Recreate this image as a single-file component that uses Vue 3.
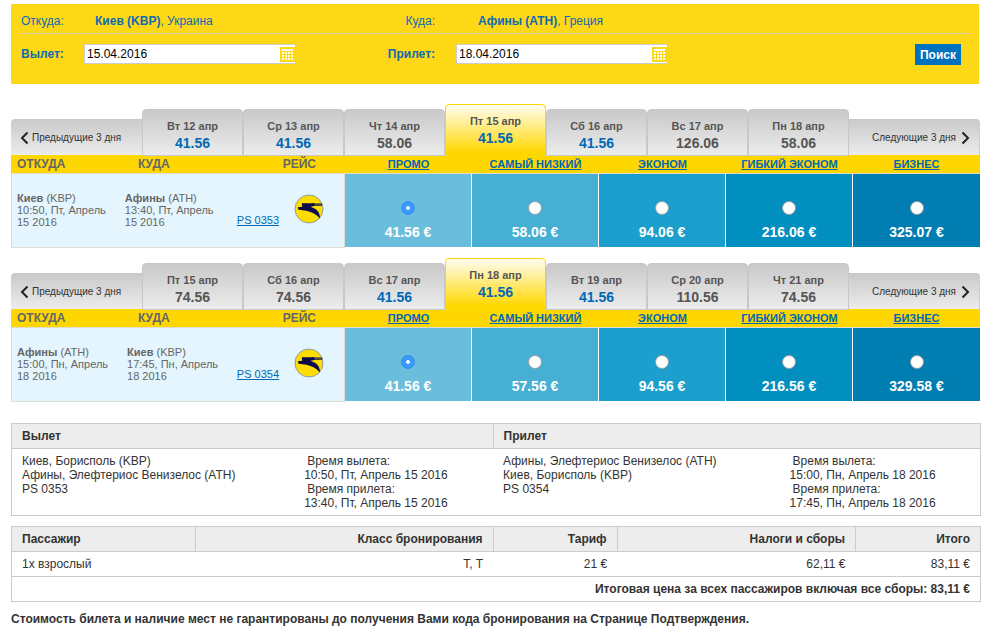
<script setup>
import { reactive } from 'vue'

const fareClasses = ['ПРОМО', 'САМЫЙ НИЗКИЙ', 'ЭКОНОМ', 'ГИБКИЙ ЭКОНОМ', 'БИЗНЕС']

const search = reactive({ departure: '15.04.2016', arrival: '18.04.2016' })

const legs = reactive([
  {
    id: 'out',
    days: [
      { label: 'Вт 12 апр', price: '41.56', best: true },
      { label: 'Ср 13 апр', price: '41.56', best: true },
      { label: 'Чт 14 апр', price: '58.06' },
      { label: 'Пт 15 апр', price: '41.56', best: true, active: true },
      { label: 'Сб 16 апр', price: '41.56', best: true },
      { label: 'Вс 17 апр', price: '126.06' },
      { label: 'Пн 18 апр', price: '58.06' },
    ],
    points: [
      { city: 'Киев', code: 'KBP', time: '10:50, Пт, Апрель', date: '15 2016' },
      { city: 'Афины', code: 'ATH', time: '13:40, Пт, Апрель', date: '15 2016' },
    ],
    flight: 'PS 0353',
    fares: ['41.56 €', '58.06 €', '94.06 €', '216.06 €', '325.07 €'],
    selected: 0,
  },
  {
    id: 'back',
    days: [
      { label: 'Пт 15 апр', price: '74.56' },
      { label: 'Сб 16 апр', price: '74.56' },
      { label: 'Вс 17 апр', price: '41.56', best: true },
      { label: 'Пн 18 апр', price: '41.56', best: true, active: true },
      { label: 'Вт 19 апр', price: '41.56', best: true },
      { label: 'Ср 20 апр', price: '110.56' },
      { label: 'Чт 21 апр', price: '74.56' },
    ],
    points: [
      { city: 'Афины', code: 'ATH', time: '15:00, Пн, Апрель', date: '18 2016' },
      { city: 'Киев', code: 'KBP', time: '17:45, Пн, Апрель', date: '18 2016' },
    ],
    flight: 'PS 0354',
    fares: ['41.56 €', '57.56 €', '94.56 €', '216.56 €', '329.58 €'],
    selected: 0,
  },
])

const trips = [
  {
    lines: ['Киев, Борисполь (KBP)', 'Афины, Элефтериос Венизелос (ATH)', 'PS 0353'],
    departs: '10:50, Пт, Апрель 15 2016',
    arrives: '13:40, Пт, Апрель 15 2016',
  },
  {
    lines: ['Афины, Элефтериос Венизелос (ATH)', 'Киев, Борисполь (KBP)', 'PS 0354'],
    departs: '15:00, Пн, Апрель 18 2016',
    arrives: '17:45, Пн, Апрель 18 2016',
  },
]
</script>

<template>
  <main class="page">
    <form class="search" @submit.prevent>
      <div class="route">
        <span>Откуда:</span>
        <span class="from"><b>Киев (KBP)</b>, Украина</span>
        <span class="right">Куда:</span>
        <span class="to"><b>Афины (ATH)</b>, Греция</span>
      </div>
      <div class="dates">
        <label for="departure">Вылет:</label>
        <div class="date">
          <input id="departure" v-model="search.departure" type="text" />
          <button type="button" aria-label="Календарь вылета">
            <svg width="15" height="15" viewBox="0 0 15 15" shape-rendering="crispEdges">
              <rect width="15" height="15" fill="#fdd816" />
              <path d="M2 2h11v2H2zM2 5h2v2H2zM5 5h2v2H5zM8 5h2v2H8zM11 5h2v2h-2zM2 8h2v2H2zM5 8h2v2H5zM8 8h2v2H8zM11 8h2v2h-2zM2 11h2v2H2zM5 11h2v2H5zM8 11h2v2H8zM11 11h2v2h-2z" fill="#fff" />
            </svg>
          </button>
        </div>
        <label class="right" for="arrival">Прилет:</label>
        <div class="date">
          <input id="arrival" v-model="search.arrival" type="text" />
          <button type="button" aria-label="Календарь прилета">
            <svg width="15" height="15" viewBox="0 0 15 15" shape-rendering="crispEdges">
              <rect width="15" height="15" fill="#fdd816" />
              <path d="M2 2h11v2H2zM2 5h2v2H2zM5 5h2v2H5zM8 5h2v2H8zM11 5h2v2h-2zM2 8h2v2H2zM5 8h2v2H5zM8 8h2v2H8zM11 8h2v2h-2zM2 11h2v2H2zM5 11h2v2H5zM8 11h2v2H8zM11 11h2v2h-2z" fill="#fff" />
            </svg>
          </button>
        </div>
        <button class="submit" type="submit">Поиск</button>
      </div>
    </form>

    <section v-for="leg in legs" :key="leg.id" class="leg">
      <nav class="days">
        <button type="button" class="shift">
          <svg width="9" height="14" viewBox="0 0 9 14"><path d="M7.500 1.500 2 7l5.500 5.500" /></svg>
          Предыдущие 3 дня
        </button>
        <button
          v-for="day in leg.days"
          :key="day.label"
          type="button"
          class="day"
          :class="{ active: day.active, best: day.best }"
        >
          <span>{{ day.label }}</span>
          <strong>{{ day.price }}</strong>
        </button>
        <button type="button" class="shift next">
          Следующие 3 дня
          <svg width="9" height="14" viewBox="0 0 9 14"><path d="M1.500 1.500 7 7l-5.500 5.500" /></svg>
        </button>
      </nav>
      <table class="fares">
        <colgroup>
          <col class="c-from" />
          <col class="c-to" />
          <col class="c-flight" />
          <col v-for="name in fareClasses" :key="name" />
        </colgroup>
        <thead>
          <tr>
            <th>ОТКУДА</th>
            <th>КУДА</th>
            <th class="flight-head">РЕЙС</th>
            <th v-for="name in fareClasses" :key="name" class="fare-name"><a href="#">{{ name }}</a></th>
          </tr>
        </thead>
        <tbody>
          <tr>
            <td colspan="3" class="info">
              <div class="info-row">
                <p v-for="point in leg.points" :key="point.code">
                  <b>{{ point.city }}</b> ({{ point.code }})<br />{{ point.time }}<br />{{ point.date }}
                </p>
                <a class="flight" href="#">{{ leg.flight }}</a>
                <svg class="logo" width="30" height="30" viewBox="0 0 30 30">
                  <circle cx="15" cy="15" r="14" fill="#fddc00" stroke="#8e9cad" />
                  <path d="M18 9.300H28.200V12H18z" fill="#4b4b42" />
                  <path d="M7.700 9.300H20.500V12L16.500 12.800C21 14.500 26 16.500 26 24.500 22.500 20.500 18 18 12.500 16.800L4.600 15.800 3.800 13.300 8.300 12.800z" fill="#0c0b4a" />
                </svg>
              </div>
            </td>
            <td v-for="(fare, i) in leg.fares" :key="fare" class="fare" :class="'tone-' + i">
              <label>
                <input v-model="leg.selected" type="radio" :name="leg.id" :value="i" />
                <span>{{ fare }}</span>
              </label>
            </td>
          </tr>
        </tbody>
      </table>
    </section>

    <table class="summary trips">
      <colgroup><col class="t1" /><col class="t2" /><col class="t3" /><col class="t4" /></colgroup>
      <thead>
        <tr>
          <th colspan="2">Вылет</th>
          <th colspan="2">Прилет</th>
        </tr>
      </thead>
      <tbody>
        <tr>
          <template v-for="trip in trips" :key="trip.departs">
            <td class="places">
              <div v-for="line in trip.lines" :key="line">{{ line }}</div>
            </td>
            <td class="times">
              <div class="caption">Время вылета:</div>
              <div>{{ trip.departs }}</div>
              <div class="caption">Время прилета:</div>
              <div>{{ trip.arrives }}</div>
            </td>
          </template>
        </tr>
      </tbody>
    </table>

    <table class="summary cost">
      <colgroup><col class="p1" /><col class="p2" /><col class="p3" /><col class="p4" /><col class="p5" /></colgroup>
      <thead>
        <tr>
          <th>Пассажир</th>
          <th>Класс бронирования</th>
          <th>Тариф</th>
          <th>Налоги и сборы</th>
          <th>Итого</th>
        </tr>
      </thead>
      <tbody>
        <tr>
          <td>1x взрослый</td>
          <td>T, T</td>
          <td>21 €</td>
          <td>62,11 €</td>
          <td>83,11 €</td>
        </tr>
        <tr class="total">
          <td colspan="5">Итоговая цена за всех пассажиров включая все сборы: 83,11 €</td>
        </tr>
      </tbody>
    </table>

    <p class="note">
      Стоимость билета и наличие мест не гарантированы до получения Вами кода бронирования на Странице Подтверждения.
    </p>
  </main>
</template>

<style>
body {
  margin: 0;
  background: #fff;
}
</style>

<style scoped>
.page {
  box-sizing: border-box;
  padding: 4px 22px 0 11px;
  font-family: "Liberation Sans", Arial, sans-serif;
  font-size: 12px;
  line-height: 14px;
  color: #333;
}
button,
input {
  font-family: inherit;
}
button {
  border: 0;
  padding: 0;
  cursor: pointer;
}
a {
  color: #0068b6;
}

.search {
  margin-right: 2px;
  padding: 0 10px 19px;
  background: #fdd816;
  color: #0f6ab4;
}
.route,
.dates {
  display: grid;
  grid-template-columns: 63px 212px 139px 212px 1fr;
  align-items: center;
}
.route {
  box-sizing: border-box;
  height: 30px;
  padding-top: 5px;
  border-bottom: 1px solid #d8d0a8;
}
.from {
  padding-left: 11px;
}
.to {
  padding-left: 43px;
}
.right {
  text-align: right;
}
.dates {
  grid-template-columns: 63px 212px 139px 21px 212px 1fr;
  align-items: start;
  padding-top: 10px;
}
.dates label {
  font-weight: bold;
  line-height: 20px;
}
.date {
  display: flex;
  align-items: center;
  box-sizing: border-box;
  height: 20px;
  border: 1px solid #ccc;
  background: #fff;
}
.date:last-of-type {
  grid-column: 5;
}
.date input {
  flex: 1;
  min-width: 0;
  border: 0;
  padding: 0 2px;
  outline: 0;
  background: none;
  font-size: 12px;
  color: #000;
}
.date button {
  display: flex;
}
.submit {
  grid-column: 6;
  justify-self: end;
  width: 46px;
  height: 21px;
  margin-right: 8px;
  background: #0071bf;
  color: #fff;
  font-size: 12px;
  font-weight: bold;
  line-height: 20px;
}

.leg {
  margin: 20px 1px 0 0;
}
.leg + .leg {
  margin-top: 10px;
}
.days {
  display: grid;
  grid-template-columns: 131px repeat(7, 1fr) 131px;
  align-items: end;
}
.shift {
  display: flex;
  align-items: center;
  gap: 3px;
  height: 36px;
  padding: 1px 9px 0;
  border-radius: 4px 0 0 0;
  background: linear-gradient(#c9c9c9, #ececec);
  color: #333;
  font-size: 10px;
}
.shift svg {
  fill: none;
  stroke: #222;
  stroke-width: 2;
}
.shift.next {
  justify-content: flex-end;
  gap: 5px;
  border-right: 1px solid #ccc;
  border-radius: 0 4px 0 0;
}
.day {
  position: relative;
  display: flex;
  flex-direction: column;
  align-items: center;
  box-sizing: border-box;
  height: 47px;
  margin-bottom: -1px;
  padding-top: 9px;
  border: 1px solid #c8c8c8;
  border-radius: 4px 4px 0 0;
  background: linear-gradient(#c9c9c9, #ececec);
  color: #555;
  font-size: 11px;
  font-weight: bold;
  line-height: 14px;
}
.day strong {
  margin-top: 2px;
  font-size: 14px;
  line-height: 16px;
}
.day.best strong {
  color: #0068b6;
}
.day.active {
  height: 52px;
  border-color: #ffd700;
  background: linear-gradient(#fffdf2, #ffd700 95%);
}

.fares {
  width: 100%;
  table-layout: fixed;
  border-collapse: separate;
  border-spacing: 0;
}
.c-from,
.c-to {
  width: 121px;
}
.c-flight {
  width: 92px;
}
.fares th {
  height: 18px;
  padding: 0 0 0 6px;
  border-bottom: 1px solid #dfdccd;
  background: #ffd700;
  color: #666;
  font-size: 12px;
  line-height: 18px;
  text-align: left;
}
.fares .flight-head {
  padding: 0 29px 0 0;
  text-align: right;
}
.fares .fare-name {
  padding: 0;
  font-size: 11px;
  text-align: center;
}
.info {
  padding: 0 20px 2px 5px;
  border: 1px solid #ddddd2;
  border-top: 0;
  background: #e4f5fd;
  color: #666;
  font-size: 11px;
  line-height: 12px;
  white-space: nowrap;
}
.info-row {
  display: flex;
}
.info-row p {
  margin: 0;
}
.info-row p + p {
  margin-left: 19px;
}
.flight {
  align-self: flex-end;
  margin: 0 15px 2px auto;
}
.logo {
  flex: none;
  margin-top: 2px;
}
.fare {
  height: 73px;
  padding: 0;
  border-right: 1px solid #fff;
  border-bottom: 1px solid #fff;
  color: #fff;
  text-align: center;
  vertical-align: top;
}
.fare:last-child {
  border-right: 0;
}
.fare label {
  display: flex;
  flex-direction: column;
  align-items: center;
  gap: 8px;
  padding-top: 27px;
  font-size: 14px;
  font-weight: bold;
  line-height: 18px;
}
.fare input {
  appearance: none;
  width: 14px;
  height: 14px;
  margin: 0;
  border: 1px solid #9a9fa2;
  border-radius: 50%;
  background: #fff;
}
.fare input:checked {
  border-color: #2f8df5;
  background: radial-gradient(circle, #fff 2px, #3b99fc 2px);
}
.tone-0 { background: #6abedb; }
.tone-1 { background: #46afd3; }
.tone-2 { background: #1c9fcc; }
.tone-3 { background: #008fbf; }
.tone-4 { background: #007eb1; }

.summary {
  width: 100%;
  table-layout: fixed;
  border-collapse: collapse;
  border: 1px solid #ccc;
}
.summary th {
  height: 24px;
  padding: 0 10px;
  border: 1px solid #ccc;
  background: #ededed;
  text-align: left;
}
.trips {
  margin-top: 21px;
}
.trips td {
  padding: 5px 0 5px 10px;
  vertical-align: top;
}
.trips .times {
  padding-left: 0;
}
.trips .caption {
  padding-left: 3px;
}
.t1 { width: 30.2%; }
.t2 { width: 19.5%; }
.t3 { width: 30.6%; }
.t4 { width: 19.7%; }

.cost {
  margin-top: 10px;
}
.cost td {
  height: 24px;
  padding: 0 10px;
  border-bottom: 1px solid #ccc;
}
.cost th:not(:first-child),
.cost td:not(:first-child),
.cost .total td {
  text-align: right;
}
.cost .total {
  font-weight: bold;
}
.p1 { width: 19%; }
.p2 { width: 30.7%; }
.p3 { width: 12.8%; }
.p4 { width: 24.6%; }
.p5 { width: 12.9%; }

.note {
  margin: 10px 0 0;
  font-weight: bold;
}
</style>
